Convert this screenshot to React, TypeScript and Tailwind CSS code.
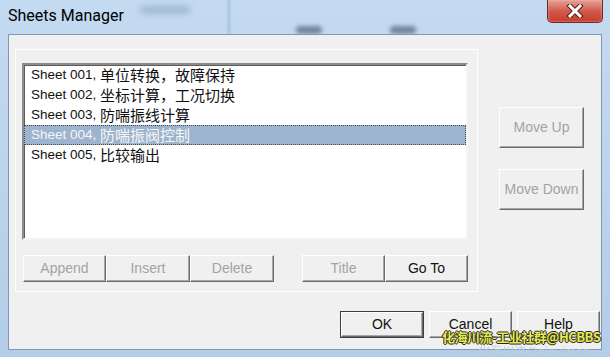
import React from "react";

const latin = "font-['Liberation_Sans','Noto_Sans_CJK_SC',sans-serif]";
const cjk = "font-['Noto_Sans_CJK_SC',sans-serif]";

interface Sheet {
    no: string;
    name: string;
}

const sheets: Sheet[] = [
    { no: "001", name: "单位转换，故障保持" },
    { no: "002", name: "坐标计算，工况切换" },
    { no: "003", name: "防喘振线计算" },
    { no: "004", name: "防喘振阀控制" },
    { no: "005", name: "比较输出" },
];

interface BtnProps {
    label: string;
    w: string;
    h?: string;
    disabled?: boolean;
    isDefault?: boolean;
}

function Btn({ label, w, h = "h-[27px]", disabled, isDefault }: BtnProps) {
    const inner = (
        <div
            className={`flex h-full w-full items-center justify-center border border-t-white border-l-white border-r-[#6b6b6b] border-b-[#6b6b6b] bg-[#f0f0f0] shadow-[inset_-1px_-1px_0_#a8a8a8] text-[14px] ${latin} ${
                disabled ? "text-[#a3a3a3]" : "text-[#111]"
            }`}
        >
            {label}
        </div>
    );
    if (isDefault) {
        return <div className={`${w} ${h} border border-[#3c3c3c]`}>{inner}</div>;
    }
    return <div className={`${w} ${h}`}>{inner}</div>;
}

export default function App() {
    return (
        <div className="relative h-[357px] w-[610px] overflow-hidden bg-gradient-to-b from-[#c3daf1] to-[#b4cde8]">
            {/* blurred desktop behind the glass frame */}
            <div className="absolute left-[140px] top-[6px] h-[8px] w-[50px] rounded-full bg-[#6f86a2] opacity-40 blur-[3px]" />
            <div className="absolute left-[228px] top-0 h-[34px] w-[2px] bg-[#8ea6c2] opacity-60 blur-[1px]" />
            <div className="absolute left-[296px] top-[26px] h-[8px] w-[26px] rounded bg-[#3e4f66] opacity-60 blur-[2px]" />
            <div className="absolute left-[390px] top-[26px] h-[8px] w-[26px] rounded bg-[#3e4f66] opacity-60 blur-[2px]" />

            {/* title bar */}
            <div className="relative flex h-[34px] items-start">
                <div className="pl-[8px] pt-[6px] font-['Roboto',sans-serif] text-[16px] leading-[20px] text-black">
                    Sheets Manager
                </div>
                <div className="ml-auto mr-[7px] flex h-[23px] w-[56px] items-center justify-center rounded-b-[5px] border border-t-0 border-[#6a2c25] bg-gradient-to-b from-[#e6a196] via-[#d25a4b] to-[#c63b2d] shadow-[inset_0_0_2px_#f7c2b8]">
                    <svg width="18" height="14" viewBox="0 0 18 14">
                        <path d="M4 2 L14 12 M14 2 L4 12" stroke="#5a1e18" strokeWidth="5" strokeLinecap="square" />
                        <path d="M4 2 L14 12 M14 2 L4 12" stroke="#ffffff" strokeWidth="3" strokeLinecap="square" />
                    </svg>
                </div>
            </div>

            {/* client area */}
            <div className="relative mx-2 flex h-[316px] flex-col border border-[#8197b1] bg-[#f0f0f0]">
                <div className="flex">
                    <div className="ml-[6px] mt-[14px] flex h-[243px] w-[463px] flex-col border border-white pl-[6px] pt-[13px]">
                        {/* list box */}
                        <div className="h-[177px] w-[446px] border-2 border-t-[#8c8c8c] border-l-[#8c8c8c] border-r-[#f4f4f4] border-b-[#f4f4f4] bg-white shadow-[inset_1px_1px_0_#5e5e5e]">
                            <div className="flex flex-col">
                                {sheets.map((s, i) => {
                                    const sel = i === 3;
                                    return (
                                        <div
                                            key={s.no}
                                            className={`flex h-[20px] items-center pl-[6px] ${
                                                sel
                                                    ? "border border-dotted border-[#4a4a4a] bg-[#9db4cf] text-[#f6f6f6]"
                                                    : "border border-transparent text-[#111]"
                                            }`}
                                        >
                                            <span className={`${latin} text-[13.5px]`}>Sheet {s.no},&nbsp;</span>
                                            <span className={`${cjk} text-[15px] leading-[18px]`}>{s.name}</span>
                                        </div>
                                    );
                                })}
                            </div>
                        </div>

                        {/* list buttons */}
                        <div className="ml-[1px] mt-[15px] flex">
                            <Btn label="Append" w="w-[83px]" disabled />
                            <Btn label="Insert" w="w-[84px]" disabled />
                            <Btn label="Delete" w="w-[84px]" disabled />
                            <div className="w-[28px]" />
                            <Btn label="Title" w="w-[83px]" disabled />
                            <Btn label="Go To" w="w-[83px]" />
                        </div>
                    </div>

                    <div className="ml-[21px] mt-[72px] flex flex-col gap-[21px]">
                        <Btn label="Move Up" w="w-[85px]" h="h-[41px]" disabled />
                        <Btn label="Move Down" w="w-[85px]" h="h-[41px]" disabled />
                    </div>
                </div>

                {/* dialog buttons */}
                <div className="mt-[19px] flex justify-end gap-[5px] pr-[1px]">
                    <Btn label="OK" w="w-[84px]" isDefault />
                    <Btn label="Cancel" w="w-[83px]" />
                    <Btn label="Help" w="w-[83px]" />
                </div>
            </div>

            {/* watermark */}
            <div className={`absolute left-[478px] top-[344px] ${cjk} text-[12px] leading-[13px] text-[#b7c9df] opacity-80`}>
                化海川流@qinyiman
            </div>
            <div
                className={`absolute left-[442px] top-[329px] ${cjk} text-[13px] leading-[16px] font-bold tracking-[-0.5px] text-[#e4e85a] [text-shadow:1px_0_0_#2a2a10,-1px_0_0_#2a2a10,0_1px_0_#2a2a10,0_-1px_0_#2a2a10]`}
            >
                化海川流-工业社群@HCBBS
            </div>
        </div>
    );
}
